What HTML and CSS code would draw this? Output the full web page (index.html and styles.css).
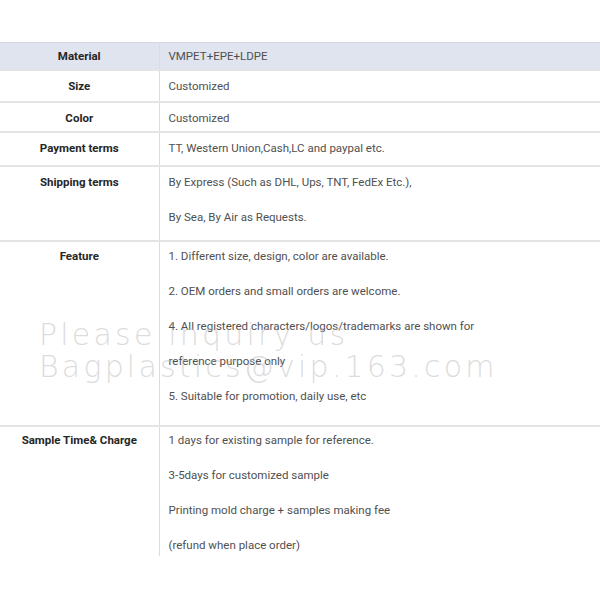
FILE: index.html
```html
<!DOCTYPE html>
<html>

<head>
  <title>Product Specification</title>
  <link rel="stylesheet" href="styles.css">
</head>

<body>
  <div class="sheet">
    <table class="spec-table">
      <tr class="row-head">
        <th>Material</th>
        <td>VMPET+EPE+LDPE</td>
      </tr>
      <tr class="row-size">
        <th>Size</th>
        <td>Customized</td>
      </tr>
      <tr class="row-color">
        <th>Color</th>
        <td>Customized</td>
      </tr>
      <tr class="row-payment">
        <th>Payment terms</th>
        <td>TT, Western Union,Cash,LC and paypal etc.</td>
      </tr>
      <tr class="row-shipping">
        <th>Shipping terms</th>
        <td>
          <p>By Express (Such as DHL, Ups, TNT, FedEx Etc.),</p>
          <p>By Sea, By Air as Requests.</p>
        </td>
      </tr>
      <tr class="row-feature">
        <th>Feature</th>
        <td>
          <p>1. Different size, design, color are available.</p>
          <p>2. OEM orders and small orders are welcome.</p>
          <p>4. All registered characters/logos/trademarks are shown for</p>
          <p>reference purpose only</p>
          <p>5. Suitable for promotion, daily use, etc</p>
        </td>
      </tr>
      <tr class="row-sample">
        <th>Sample Time&amp; Charge</th>
        <td>
          <p>1 days for existing sample for reference.</p>
          <p>3-5days for customized sample</p>
          <p>Printing mold charge + samples making fee</p>
          <p>(refund when place order)</p>
        </td>
      </tr>
    </table>

    <div class="watermark">
      <div>Please inquiry us</div>
      <div>Bagplastics@vip.163.com</div>
    </div>
  </div>
</body>

</html>
```

FILE: styles.css
```css
* {
  box-sizing: border-box;
  margin: 0;
  padding: 0;
}

body {
  font-family: 'Roboto', sans-serif;
  background-color: #ffffff;
  color: #505050;
}

.sheet {
  position: relative;
  padding-top: 42px;
}

.spec-table {
  width: 100%;
  border-collapse: collapse;
  font-size: 11.5px;
  line-height: 20px;
}

.spec-table th {
  width: 159px;
  font-weight: 700;
  color: #262626;
  text-align: center;
  vertical-align: top;
  border-right: 1px solid #dcdcdc;
}

.spec-table td {
  text-align: left;
  vertical-align: top;
  padding-left: 9px;
}

.spec-table tr {
  border-bottom: 2px solid #e4e4e4;
}

.spec-table p + p {
  margin-top: 15px;
}

.row-head {
  background-color: #dfe4ee;
  border-top: 1px solid #d4d8e2;
}

.row-head th,
.row-head td {
  padding-top: 3px;
  padding-bottom: 3px;
}

.row-size th,
.row-size td {
  padding-top: 5px;
  padding-bottom: 5px;
}

.row-color th,
.row-color td {
  padding-top: 5px;
  padding-bottom: 3px;
}

.row-payment th,
.row-payment td {
  padding-top: 5px;
  padding-bottom: 7px;
}

.row-shipping th,
.row-shipping td {
  padding-top: 5px;
  padding-bottom: 13px;
}

.row-feature th,
.row-feature td {
  padding-top: 4px;
  padding-bottom: 19px;
}

.spec-table .row-sample {
  border-bottom: none;
}

.row-sample th,
.row-sample td {
  padding-top: 3px;
  padding-bottom: 1px;
}

.watermark {
  position: absolute;
  left: 39px;
  top: 319px;
  font-family: 'DejaVu Sans', sans-serif;
  font-weight: 200;
  font-size: 30px;
  line-height: 32px;
  letter-spacing: 3.2px;
  color: rgba(190, 190, 190, 0.55);
  pointer-events: none;
}
```
